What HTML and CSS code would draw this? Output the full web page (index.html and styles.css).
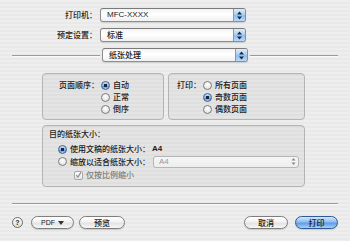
FILE: index.html
```html
<!DOCTYPE html>
<html>
<head>
<meta charset="utf-8">
<link rel="stylesheet" href="styles.css">
</head>
<body>
<div class="dialog">
  <div class="row">
    <span class="lbl">打印机：</span>
    <div class="popup main"><span class="val latin">MFC-XXXX</span><span class="arrows"><svg width="7" height="9" viewBox="0 0 7 9"><path d="M3.5 0.5 L6 3.5 H1 Z M3.5 8.5 L6 5.5 H1 Z" fill="#1c2a40"/></svg></span></div>
  </div>
  <div class="row">
    <span class="lbl">预定设置：</span>
    <div class="popup main"><span class="val">标准</span><span class="arrows"><svg width="7" height="9" viewBox="0 0 7 9"><path d="M3.5 0.5 L6 3.5 H1 Z M3.5 8.5 L6 5.5 H1 Z" fill="#1c2a40"/></svg></span></div>
  </div>
  <div class="row">
    <span class="hline left"></span>
    <div class="popup main"><span class="val">纸张处理</span><span class="arrows"><svg width="7" height="9" viewBox="0 0 7 9"><path d="M3.5 0.5 L6 3.5 H1 Z M3.5 8.5 L6 5.5 H1 Z" fill="#1c2a40"/></svg></span></div>
    <span class="hline right"></span>
  </div>

  <div class="groups">
    <div class="group g1">
      <span class="glabel">页面顺序：</span>
      <div class="radios">
        <div class="opt"><span class="radio on"></span>自动</div>
        <div class="opt"><span class="radio"></span>正常</div>
        <div class="opt"><span class="radio"></span>倒序</div>
      </div>
    </div>
    <div class="group g2">
      <span class="glabel">打印：</span>
      <div class="radios">
        <div class="opt"><span class="radio"></span>所有页面</div>
        <div class="opt"><span class="radio on"></span>奇数页面</div>
        <div class="opt"><span class="radio"></span>偶数页面</div>
      </div>
    </div>
  </div>

  <div class="group g3">
    <div class="title">目的纸张大小：</div>
    <div class="opt o1"><span class="radio on"></span>使用文稿的纸张大小：<span class="size latin">A4</span></div>
    <div class="opt o2"><span class="radio"></span>缩放以适合纸张大小：<div class="popup dis"><span class="val latin">A4</span><span class="arrows"><svg width="7" height="9" viewBox="0 0 7 9"><path d="M3.5 1 L5.5 3.5 H1.5 Z M3.5 8 L5.5 5.5 H1.5 Z" fill="#8a8a8a"/></svg></span></div></div>
    <div class="opt o3"><span class="check"><svg width="8" height="8" viewBox="0 0 8 8"><path d="M1.5 4.2 L3.3 6.3 L6.8 1" fill="none" stroke="#8a8a8a" stroke-width="1.3"/></svg></span>仅按比例缩小</div>
  </div>

  <div class="sep"></div>

  <div class="buttons">
    <span class="help">?</span>
    <span class="btn pdf latin">PDF <svg width="6" height="4" viewBox="0 0 6 4"><path d="M0 0 H6 L3 4 Z" fill="#333"/></svg></span>
    <span class="btn preview">预览</span>
    <span class="spacer"></span>
    <span class="btn cancel">取消</span>
    <span class="btn default">打印</span>
  </div>
</div>
</body>
</html>
```

FILE: styles.css
```css
* { box-sizing: border-box; }
html, body { margin: 0; padding: 0; }
body {
  width: 350px;
  height: 241px;
  overflow: hidden;
  background: repeating-linear-gradient(to bottom, #eeeeee 0 2px, #e9e9e9 2px 4px);
  font-family: "Noto Sans CJK SC", "Liberation Sans", sans-serif;
  font-size: 8px;
  font-weight: 500;
  color: #1a1a1a;
}
.latin { font-family: "Liberation Sans", "DejaVu Sans", sans-serif; }
.dialog { padding-top: 8px; }

.row {
  display: flex;
  align-items: center;
  height: 14px;
  margin-bottom: 6px;
}
.lbl {
  width: 100px;
  text-align: right;
  padding-right: 3px;
  line-height: 14px;
}
.hline { height: 1px; background: #9a9a9a; box-shadow: 0 1px 0 #fafafa; }
.hline.left { width: 88px; margin-left: 12px; margin-right: 2px; }
.hline.right { width: 88px; margin-left: 2px; }

.popup {
  display: flex;
  align-items: stretch;
  height: 14px;
  border: 1px solid #8e8e8e;
  border-top-color: #7a7a7a;
  border-radius: 3px;
  background: linear-gradient(to bottom, #f4f4f4, #ffffff 45%, #f0f0f0);
  box-shadow: 0 1px 1px rgba(0,0,0,0.12);
  overflow: hidden;
}
.popup.main { width: 146px; }
.popup .val {
  flex: 1;
  padding-left: 6px;
  line-height: 12px;
  font-size: 8px;
}
.popup .arrows {
  width: 12px;
  display: flex;
  align-items: center;
  justify-content: center;
  border-left: 1px solid #7d9cc4;
  background: linear-gradient(to bottom, #deecfc, #a9cdf4 50%, #8cbdf0 55%, #b9dbfc);
}

.groups {
  display: flex;
  gap: 4px;
  margin-left: 42px;
  margin-top: 11px;
}
.group {
  border: 1px solid #b4b4b4;
  border-radius: 4px;
  background: rgba(0,0,0,0.04);
  box-shadow: inset 0 1px 0 rgba(0,0,0,0.03);
}
.g1, .g2 {
  height: 47px;
  display: flex;
  align-items: flex-start;
  padding-top: 5px;
}
.g1 { width: 122px; }
.g2 { width: 137px; }
.g1 .glabel { width: 58px; text-align: right; line-height: 12px; padding-right: 2px; }
.g2 .glabel { width: 34px; text-align: right; line-height: 12px; padding-right: 2px; }
.radios { display: flex; flex-direction: column; }
.opt {
  display: flex;
  align-items: center;
  height: 12px;
  line-height: 12px;
  white-space: nowrap;
}
.radio {
  width: 9px;
  height: 9px;
  border-radius: 50%;
  border: 1px solid #7b7b7b;
  background: radial-gradient(circle at 50% 35%, #ffffff, #e6e6e6 70%, #cfcfcf);
  margin-right: 3px;
  flex: none;
}
.radio.on {
  border-color: #3d5f8e;
  background: radial-gradient(circle at 50% 50%, #1a2638 0 1.6px, transparent 2px),
              linear-gradient(to bottom, #cfe3fa, #7fb1ea 55%, #5a96de 60%, #a4cdf8);
}

.g3 {
  width: 263px;
  height: 62px;
  margin-left: 42px;
  margin-top: 5px;
  padding-top: 2px;
  padding-left: 6px;
}
.g3 .title { line-height: 11px; }
.g3 .o1 { margin-left: 9px; margin-top: 4px; }
.g3 .o2 { margin-left: 9px; height: 13px; }
.g3 .o3 { margin-left: 25px; margin-top: 1px; color: #7d7d7d; }
.size { margin-left: 2px; font-weight: bold; font-size: 8px; }
.popup.dis {
  width: 146px;
  height: 12px;
  margin-left: 3px;
  border-color: #b5b5b5;
  background: linear-gradient(to bottom, #f6f6f6, #ededed);
  box-shadow: none;
}
.popup.dis .val { color: #9a9a9a; line-height: 10px; padding-left: 5px; }
.popup.dis .arrows { border-left: none; background: transparent; width: 10px; }
.check {
  width: 9px;
  height: 9px;
  border: 1px solid #a8a8a8;
  border-radius: 2px;
  background: linear-gradient(to bottom, #fbfbfb, #e6e6e6);
  margin-right: 3px;
  display: flex;
  align-items: center;
  justify-content: center;
}

.sep {
  margin: 16px 12px 0 12px;
  height: 1px;
  background: #9a9a9a;
  box-shadow: 0 1px 0 #fafafa;
}

.buttons {
  display: flex;
  align-items: center;
  margin-top: 12px;
  padding-left: 12px;
  padding-right: 12px;
  height: 13px;
}
.help {
  width: 11px;
  height: 11px;
  border-radius: 50%;
  border: 1px solid #6a6a6a;
  background: linear-gradient(to bottom, #ffffff, #dcdcdc);
  font-family: "Liberation Sans", sans-serif;
  font-weight: bold;
  font-size: 7px;
  display: flex;
  align-items: center;
  justify-content: center;
  margin-right: 8px;
}
.btn {
  height: 13px;
  border: 1px solid #7e7e7e;
  border-radius: 7px;
  background: linear-gradient(to bottom, #ffffff, #f2f2f2 45%, #e3e3e3 55%, #f7f7f7);
  display: flex;
  align-items: center;
  justify-content: center;
  line-height: 11px;
  box-shadow: 0 1px 1px rgba(0,0,0,0.15);
}
.pdf { width: 43px; font-size: 7px; gap: 3px; }
.preview { width: 46px; margin-left: 5px; }
.spacer { flex: 1; }
.cancel { width: 44px; margin-right: 7px; }
.default {
  width: 43px;
  border-color: #2f5a92;
  background: linear-gradient(to bottom, #d4e6fb, #8fbdf0 45%, #5d9ce6 55%, #a6d0fa);
}
```
